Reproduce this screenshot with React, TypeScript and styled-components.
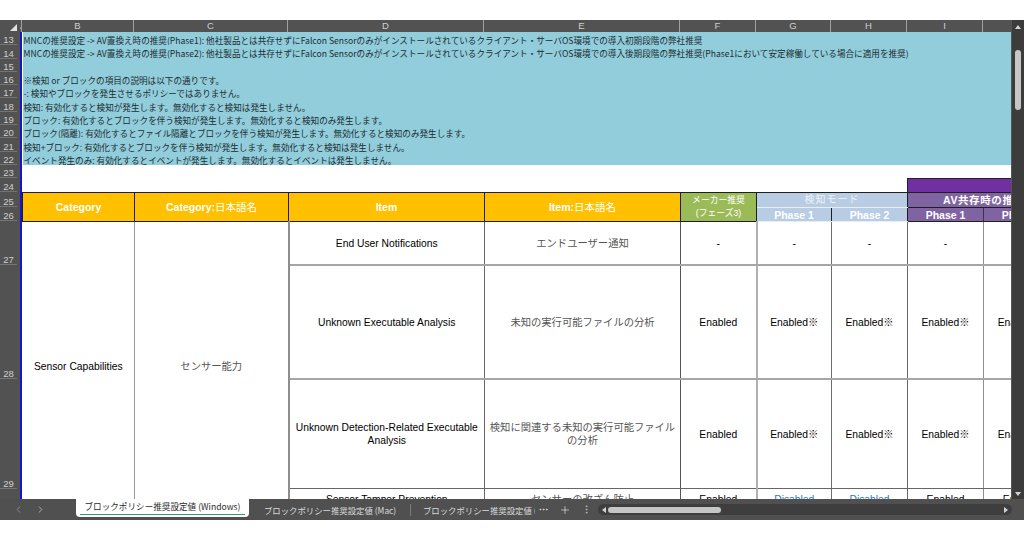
import styled, { createGlobalStyle } from 'styled-components';
import { ChevronLeft, ChevronRight, Ellipsis, EllipsisVertical, Plus } from 'lucide-react';

const columns = [
  { label: 'A', width: 2 },
  { label: 'B', width: 112 },
  { label: 'C', width: 154 },
  { label: 'D', width: 196 },
  { label: 'E', width: 196 },
  { label: 'F', width: 76 },
  { label: 'G', width: 75 },
  { label: 'H', width: 76 },
  { label: 'I', width: 76 },
  { label: '', width: 78 },
];

const sheetColumns = [112, 154, 196, 196, 76, 75, 76, 76, 76];

const rowNumbers = [
  { n: 13, h: 13.3 }, { n: 14, h: 13.3 }, { n: 15, h: 13.3 }, { n: 16, h: 13.3 }, { n: 17, h: 13.3 },
  { n: 18, h: 13.3 }, { n: 19, h: 13.3 }, { n: 20, h: 13.3 }, { n: 21, h: 13.3 }, { n: 22, h: 13.3 },
  { n: 23, h: 13 }, { n: 24, h: 14 }, { n: 25, h: 15 }, { n: 26, h: 14 },
  { n: 27, h: 44 }, { n: 28, h: 114 }, { n: 29, h: 110 },
];

const notes = [
  'MNCの推奨設定 -> AV置換え時の推奨(Phase1): 他社製品とは共存せずにFalcon Sensorのみがインストールされているクライアント・サーバOS環境での導入初期段階の弊社推奨',
  'MNCの推奨設定 -> AV置換え時の推奨(Phase2): 他社製品とは共存せずにFalcon Sensorのみがインストールされているクライアント・サーバOS環境での導入後期段階の弊社推奨(Phase1において安定稼働している場合に適用を推奨)',
  '',
  '※検知 or ブロックの項目の説明は以下の通りです。',
  '-: 検知やブロックを発生させるポリシーではありません。',
  '検知: 有効化すると検知が発生します。無効化すると検知は発生しません。',
  'ブロック: 有効化するとブロックを伴う検知が発生します。無効化すると検知のみ発生します。',
  'ブロック(隔離): 有効化するとファイル隔離とブロックを伴う検知が発生します。無効化すると検知のみ発生します。',
  '検知+ブロック: 有効化するとブロックを伴う検知が発生します。無効化すると検知は発生しません。',
  'イベント発生のみ: 有効化するとイベントが発生します。無効化するとイベントは発生しません。',
];

// left rule of each value column, they alternate in the sheet
const valueRules = [
  { w: 1, c: '#555' },
  { w: 2, c: '#b0b0b0' },
  { w: 1, c: '#6e6e6e' },
  { w: 1, c: '#666' },
  { w: 1, c: '#8e8e8e' },
];

const items = [
  { en: 'End User Notifications', ja: 'エンドユーザー通知', height: 42, rule: '2px solid #a6a6a6', values: ['-', '-', '-', '-', '-'] },
  { en: 'Unknown Executable Analysis', ja: '未知の実行可能ファイルの分析', height: 112, rule: '2px solid #a6a6a6', values: ['Enabled', 'Enabled※', 'Enabled※', 'Enabled※', 'Enabled※'] },
  { en: 'Unknown Detection-Related Executable Analysis', ja: '検知に関連する未知の実行可能ファイルの分析', height: 108, rule: '1px solid #666', values: ['Enabled', 'Enabled※', 'Enabled※', 'Enabled※', 'Enabled※'] },
  { en: 'Sensor Tamper Prevention', ja: 'センサーの改ざん防止', height: 21, rule: '1px solid #666', values: ['Enabled', 'Disabled', 'Disabled', 'Enabled', 'Enabled'] },
];

export default function App() {
  return (
    <>
      <GlobalStyle />
      <Window>
        <Workspace>
          <GridArea>
            <ColumnHeader>
              <Corner><CornerMark /></Corner>
              {columns.map((c, i) => (
                <ColumnLabel key={i} style={{ width: c.width }}>{c.label}</ColumnLabel>
              ))}
            </ColumnHeader>
            <GridBody>
              <RowGutter>
                {rowNumbers.map((r) => (
                  <RowLabel key={r.n} style={{ height: r.h }}>{r.n}</RowLabel>
                ))}
              </RowGutter>
              <FrozenLine />
              <Sheet>
                <colgroup>
                  {sheetColumns.map((w, i) => <col key={i} style={{ width: w }} />)}
                </colgroup>
                <tbody>
                  {notes.map((note, i) => (
                    <tr key={i}>
                      <NoteCell colSpan={9}>{note}</NoteCell>
                    </tr>
                  ))}
                  <tr><BlankCell colSpan={9} $h={13} /></tr>
                  <tr>
                    <BlankCell colSpan={7} $h={14} />
                    <PurpleBand colSpan={2} />
                  </tr>
                  <tr>
                    <OrangeHead rowSpan={2}>Category</OrangeHead>
                    <OrangeHead rowSpan={2}>Category:<Thin>日本語名</Thin></OrangeHead>
                    <OrangeHead rowSpan={2}>Item</OrangeHead>
                    <OrangeHead rowSpan={2}>Item:<Thin>日本語名</Thin></OrangeHead>
                    <MakerHead rowSpan={2}>メーカー推奨<br />(フェーズ3)</MakerHead>
                    <BlueTop colSpan={2}>検知モード</BlueTop>
                    <PurpleTop colSpan={2}>AV共存時の推奨</PurpleTop>
                  </tr>
                  <tr>
                    <BluePhase>Phase 1</BluePhase>
                    <BluePhase>Phase 2</BluePhase>
                    <PurplePhase>Phase 1</PurplePhase>
                    <PurplePhase>Phase 2</PurplePhase>
                  </tr>
                  {items.map((item, i) => (
                    <tr key={item.en}>
                      {i === 0 && <CategoryCell rowSpan={items.length}>Sensor Capabilities</CategoryCell>}
                      {i === 0 && <CategoryJa rowSpan={items.length}>センサー能力</CategoryJa>}
                      <ItemCell $h={item.height} $rule={item.rule}>{item.en}</ItemCell>
                      <ItemJa $h={item.height} $rule={item.rule}>{item.ja}</ItemJa>
                      {item.values.map((v, j) => (
                        <ValueCell
                          key={j}
                          $off={v === 'Disabled'}
                          $rule={item.rule}
                          style={{ borderLeft: `${valueRules[j].w}px solid ${valueRules[j].c}` }}
                        >
                          {v}
                        </ValueCell>
                      ))}
                    </tr>
                  ))}
                </tbody>
              </Sheet>
            </GridBody>
          </GridArea>
          <VerticalBar>
            <ArrowUp />
            <VerticalTrack><VerticalThumb /></VerticalTrack>
            <ArrowDown />
          </VerticalBar>
        </Workspace>
        <TabBar>
          <TabNav>
            <ChevronLeft size={11} strokeWidth={1.5} color="#a0a0a0" />
            <ChevronRight size={11} strokeWidth={1.5} color="#d0d0d0" />
          </TabNav>
          <ActiveTab><ActiveLabel>ブロックポリシー推奨設定値 (Windows)</ActiveLabel></ActiveTab>
          <Tab>ブロックポリシー推奨設定値 (Mac)</Tab>
          <TabDivider />
          <Tab $clipped>ブロックポリシー推奨設定値 (Linux)</Tab>
          <TabTools>
            <Ellipsis size={11} color="#d6d6d6" />
            <Plus size={12} strokeWidth={1.5} color="#d6d6d6" />
            <EllipsisVertical size={11} color="#b8b8b8" />
          </TabTools>
          <HorizontalBar>
            <ArrowLeft />
            <HorizontalThumb />
            <HorizontalSpacer />
            <ArrowRight />
          </HorizontalBar>
        </TabBar>
      </Window>
    </>
  );
}

const GlobalStyle = createGlobalStyle`
  html, body {
    margin: 0;
    background: #fff;
    overflow: hidden;
  }
  body {
    font-family: "Liberation Sans", "Noto Sans CJK JP", sans-serif;
  }
`;

const Window = styled.div`
  width: 1024px;
  height: 500px;
  margin: 20px 0;
  display: flex;
  flex-direction: column;
  background: #505050;
`;

const Workspace = styled.div`
  flex: 1;
  min-height: 0;
  display: flex;
`;

const GridArea = styled.div`
  width: 1011px;
  display: flex;
  flex-direction: column;
  overflow: hidden;
`;

const ColumnHeader = styled.div`
  height: 12px;
  flex: none;
  display: flex;
  background: #525252;
`;

const Corner = styled.div`
  width: 20px;
  flex: none;
  display: flex;
  align-items: flex-end;
  justify-content: flex-end;
  padding: 0 3px 1px 0;
  box-sizing: border-box;
`;

const CornerMark = styled.div`
  width: 0;
  height: 0;
  border-left: 7px solid transparent;
  border-bottom: 7px solid #e2e2e2;
`;

const ColumnLabel = styled.div`
  flex: none;
  box-sizing: border-box;
  overflow: hidden;
  border-right: 1px solid #a0a0a0;
  color: #cfcfcf;
  font-size: 9.5px;
  line-height: 12px;
  text-align: center;
`;

const GridBody = styled.div`
  flex: 1;
  min-height: 0;
  display: flex;
  overflow: hidden;
  background: #fff;
`;

const RowGutter = styled.div`
  width: 20px;
  flex: none;
  background: #525252;
  padding-right: 3px;
  box-sizing: border-box;
`;

const RowLabel = styled.div`
  box-sizing: border-box;
  display: flex;
  align-items: flex-end;
  justify-content: center;
  border-bottom: 1px solid #747474;
  color: #cfcfcf;
  font-size: 9.5px;
  line-height: 9px;
`;

const FrozenLine = styled.div`
  width: 2px;
  flex: none;
  background: #1414d2;
`;

const Sheet = styled.table`
  table-layout: fixed;
  width: 1037px;
  flex: none;
  border-collapse: collapse;
  align-self: flex-start;
  color: #000;
  font-size: 10px;

  td {
    padding: 0;
    overflow: hidden;
  }
`;

const NoteCell = styled.td`
  height: 10.3px;
  line-height: 10px;
  max-width: 0;
  padding: 3px 0 0 1px !important;
  background: #92cddc;
  color: #1c2c30;
  font-size: 8.6px;
  white-space: nowrap;
  font-family: "Noto Sans CJK JP", sans-serif;
`;

const BlankCell = styled.td<{ $h: number }>`
  height: ${(p) => p.$h}px;
  background: #fff;
`;

const PurpleBand = styled.td`
  background: #7030a0;
  border-top: 1px solid #222;
  border-left: 1px solid #222;
`;

const HeadCell = styled.td`
  text-align: center;
  color: #fff;
  font-weight: 700;
  line-height: 12px;
  border: 1px solid #1f1f1f;
`;

const Thin = styled.span`
  font-weight: 400;
`;

const OrangeHead = styled(HeadCell)`
  background: #ffc000;
  font-size: 10.5px;
`;

const MakerHead = styled(HeadCell)`
  background: #9bbb59;
  font-size: 8.8px;
  font-weight: 400;
  line-height: 13px;
`;

const BlueTop = styled(HeadCell)`
  height: 14px;
  background: #b8cce4;
  color: #eef3f9;
  font-size: 10px;
  font-weight: 400;
  letter-spacing: 1px;
  border-bottom-color: #e8eef6;
`;

const PurpleTop = styled(HeadCell)`
  height: 14px;
  background: #8064a2;
  font-size: 10.5px;
  letter-spacing: 0.6px;
  white-space: nowrap;
  text-align: left;
  padding-left: 35px !important;
`;

const BluePhase = styled(HeadCell)`
  height: 13px;
  background: #b8cce4;
  font-size: 10.5px;
  border-bottom-color: #e8eef6;
`;

const PurplePhase = styled(HeadCell)`
  height: 13px;
  background: #8064a2;
  font-size: 10.5px;
  border-color: #3f2f55;
  border-bottom-color: #1f1f1f;
`;

const BodyCell = styled.td`
  text-align: center;
  vertical-align: middle;
  background: #fff;
  font-size: 10.3px;
  line-height: 13px;
`;

const CategoryCell = styled(BodyCell)`
  border-right: 1px solid #9a9a9a;
`;

const CategoryJa = styled(BodyCell)`
  color: #555;
  border-right: 2px solid #8e8e8e;
`;

const ItemCell = styled(BodyCell)<{ $h: number; $rule: string }>`
  height: ${(p) => p.$h}px;
  padding: 0 2px !important;
  border-right: 1px solid #666;
  border-bottom: ${(p) => p.$rule};
`;

const ItemJa = styled(BodyCell)<{ $h: number; $rule: string }>`
  height: ${(p) => p.$h}px;
  padding: 0 4px !important;
  color: #555;
  border-bottom: ${(p) => p.$rule};
`;

const ValueCell = styled(BodyCell)<{ $off: boolean; $rule: string }>`
  color: ${(p) => (p.$off ? '#1f78c8' : '#000')};
  border-bottom: ${(p) => p.$rule};
`;

const VerticalBar = styled.div`
  width: 13px;
  flex: none;
  background: #3c3c3c;
  border-left: 1px solid #555;
  box-sizing: border-box;
  display: flex;
  flex-direction: column;
  align-items: center;
  padding: 3px 0;
`;

const ArrowUp = styled.div`
  width: 0;
  height: 0;
  margin-top: 2px;
  border: 3.5px solid transparent;
  border-top: 0;
  border-bottom: 4px solid #d4d4d4;
`;

const ArrowDown = styled.div`
  width: 0;
  height: 0;
  border: 3.5px solid transparent;
  border-bottom: 0;
  border-top: 4px solid #d4d4d4;
`;

const VerticalTrack = styled.div`
  flex: 1;
  padding-top: 21px;
`;

const VerticalThumb = styled.div`
  width: 6px;
  height: 60px;
  border-radius: 3px;
  background: #c6c6c6;
`;

const TabBar = styled.div`
  height: 21px;
  flex: none;
  display: flex;
  align-items: center;
  background: #505050;
  overflow: hidden;
`;

const TabNav = styled.div`
  width: 76px;
  flex: none;
  display: flex;
  box-sizing: border-box;
  padding-left: 13px;
  gap: 11px;
`;

const ActiveTab = styled.div`
  width: 173px;
  height: 18px;
  flex: none;
  align-self: flex-start;
  box-sizing: border-box;
  padding: 0 4px;
  background: #fff;
  border-radius: 0 0 4px 4px;
  text-align: center;
  white-space: nowrap;
`;

const ActiveLabel = styled.div`
  height: 15px;
  box-sizing: content-box;
  border-bottom: 1px solid #3f9a68;
  color: #2a2a2a;
  font-family: "Noto Sans CJK JP", sans-serif;
  font-size: 8.6px;
  line-height: 15px;
`;

const Tab = styled.div<{ $clipped?: boolean }>`
  flex: none;
  width: ${(p) => (p.$clipped ? '124px' : '161px')};
  overflow: hidden;
  padding-left: ${(p) => (p.$clipped ? '12px' : '15px')};
  box-sizing: border-box;
  color: #dcdcdc;
  font-family: "Noto Sans CJK JP", sans-serif;
  font-size: 8.4px;
  white-space: nowrap;
`;

const TabDivider = styled.div`
  width: 1px;
  height: 12px;
  flex: none;
  background: #7a7a7a;
`;

const TabTools = styled.div`
  flex: none;
  width: 63px;
  display: flex;
  align-items: center;
  gap: 10px;
  box-sizing: border-box;
  padding-left: 3px;
`;

const HorizontalBar = styled.div`
  flex: 1;
  height: 11px;
  margin-right: 12px;
  display: flex;
  align-items: center;
  gap: 2px;
  padding: 0 4px;
  border-radius: 6px;
  background: #3e3e3e;
`;

const ArrowLeft = styled.div`
  width: 0;
  height: 0;
  border: 3.5px solid transparent;
  border-left: 0;
  border-right: 4px solid #d4d4d4;
`;

const ArrowRight = styled.div`
  width: 0;
  height: 0;
  border: 3.5px solid transparent;
  border-right: 0;
  border-left: 4px solid #d4d4d4;
`;

const HorizontalThumb = styled.div`
  width: 113px;
  height: 6px;
  border-radius: 3px;
  background: #c6c6c6;
`;

const HorizontalSpacer = styled.div`
  flex: 1;
`;
